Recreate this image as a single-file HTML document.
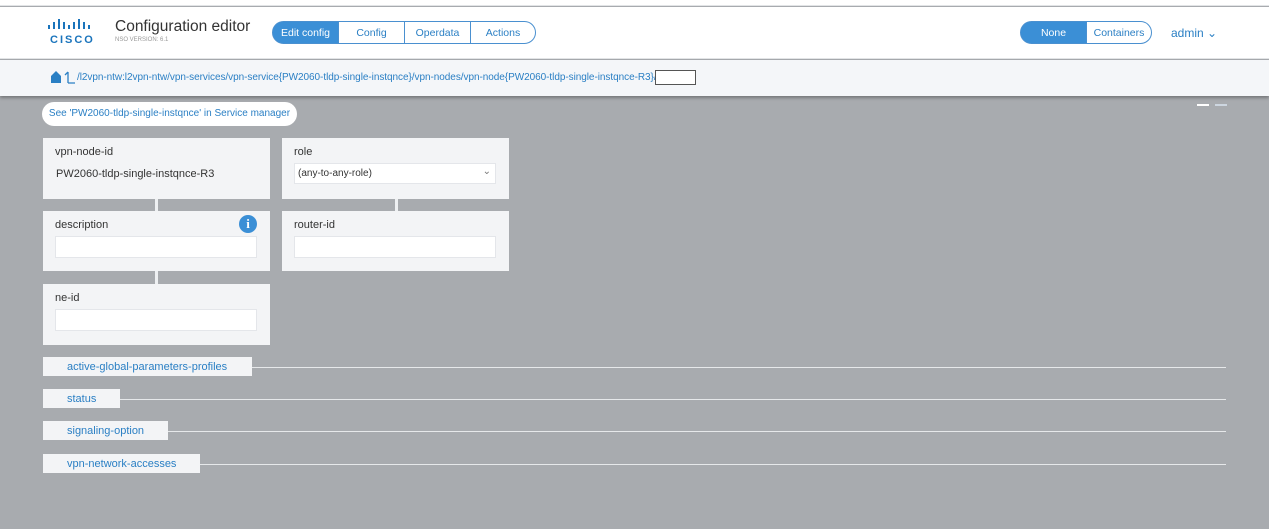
<!DOCTYPE html>
<html><head><style>
*{margin:0;padding:0;box-sizing:border-box}
body{width:1269px;height:529px;overflow:hidden;background:#a8abaf;font-family:"Liberation Sans",sans-serif;position:relative}
.a{position:absolute}
.box{position:absolute;background:#f3f4f6;width:227px}
.lbl{position:absolute;left:12px;top:8px;font-size:11px;color:#333}
.inp{position:absolute;left:12px;width:202px;height:22px;background:#fff;border:1px solid #e4e6ea}
.conn{position:absolute;width:3px;background:#eef0f2}
.exp{position:absolute;left:43px;height:19px;background:#f3f4f6;color:#2a7fc4;font-size:11px;padding:4px 0 0 24px}
.ln{position:absolute;height:1px;background:#e6e8ea;right:43px}
.seg{position:absolute;top:21px;height:23px;border:1px solid #4a90d0;font-size:10.5px;color:#2a7fc4;display:flex;align-items:center;justify-content:center;padding-top:1px}
</style></head><body>
<div class="a" style="left:0;top:0;width:1269px;height:6px;background:#fff;border-bottom:1px solid #e2e4e6"></div>
<div class="a" style="left:0;top:7px;width:1269px;height:52px;background:#fff;border-bottom:1px solid #e2e4e6"></div>
<div class="a" style="left:47px;top:19px;color:#1a74bc;font-size:10px;letter-spacing:1px;line-height:8px">
<svg width="46" height="12"><g fill="#1a74bc"><rect x="1" y="6" width="2" height="4"/><rect x="6" y="3" width="2" height="7"/><rect x="11" y="0" width="2" height="10"/><rect x="16" y="3" width="2" height="7"/><rect x="21" y="6" width="2" height="4"/><rect x="26" y="3" width="2" height="7"/><rect x="31" y="0" width="2" height="10"/><rect x="36" y="3" width="2" height="7"/><rect x="41" y="6" width="2" height="4"/></g></svg>
<div style="font-weight:bold;font-size:11px;margin-left:3px;margin-top:3px;letter-spacing:2px">CISCO</div></div>
<div class="a" style="left:115px;top:18px;font-size:15.5px;color:#333">Configuration editor</div>
<div class="a" style="left:115px;top:37px;font-size:6px;color:#999">NSO VERSION: 6.1</div>
<div class="seg" style="left:272px;width:67px;background:#3b8fd6;color:#fff;border-radius:12px 0 0 12px">Edit config</div>
<div class="seg" style="left:338px;width:67px">Config</div>
<div class="seg" style="left:404px;width:67px">Operdata</div>
<div class="seg" style="left:470px;width:66px;border-radius:0 12px 12px 0">Actions</div>
<div class="seg" style="left:1020px;width:67px;background:#3b8fd6;color:#fff;border-radius:12px 0 0 12px">None</div>
<div class="seg" style="left:1086px;width:66px;border-radius:0 12px 12px 0">Containers</div>
<div class="a" style="left:1171px;top:26px;font-size:12px;color:#2a7fc4">admin ⌄</div>
<div class="a" style="left:0;top:60px;width:1269px;height:36px;background:#f4f6f9;box-shadow:0 2px 3px rgba(0,0,0,.3)"></div>
<svg class="a" style="left:50px;top:70px" width="26" height="14"><path d="M1 6L6 1L11 6V13H1Z" fill="#2a7fc4"/><path d="M18 13V2M15 5L18 2M18 13H25" stroke="#2a7fc4" stroke-width="1.3" fill="none"/></svg>
<div class="a" style="left:77px;top:72px;font-size:10px;color:#2a7fc4;letter-spacing:-0.05px">/l2vpn-ntw:l2vpn-ntw/vpn-services/vpn-service{PW2060-tldp-single-instqnce}/vpn-nodes/vpn-node{PW2060-tldp-single-instqnce-R3}/</div>
<div class="a" style="left:655px;top:70px;width:41px;height:15px;background:#fff;border:1px solid #555"></div>
<div class="a" style="left:1197px;top:104px;width:12px;height:2px;background:#fff"></div>
<div class="a" style="left:1215px;top:104px;width:12px;height:2px;background:#cdd6e0"></div>
<div class="a" style="left:42px;top:102px;width:255px;height:24px;background:#fff;border-radius:12px;font-size:10px;color:#2a7fc4;line-height:24px;text-align:center">See 'PW2060-tldp-single-instqnce' in Service manager</div>
<div class="conn" style="left:155px;top:199px;height:12px"></div>
<div class="conn" style="left:155px;top:271px;height:13px"></div>
<div class="conn" style="left:395px;top:199px;height:12px"></div>
<div class="box" style="left:43px;top:138px;height:61px"><div class="lbl">vpn-node-id</div><div class="a" style="left:13px;top:30px;font-size:11px;color:#333">PW2060-tldp-single-instqnce-R3</div></div>
<div class="box" style="left:282px;top:138px;height:61px"><div class="lbl">role</div><div class="inp" style="top:25px;height:21px;font-size:10px;color:#333;padding:4px 3px">(any-to-any-role)<span style="position:absolute;right:4px;top:2px;color:#777">⌄</span></div></div>
<div class="box" style="left:43px;top:211px;height:60px"><div class="lbl">description</div><div class="a" style="left:196px;top:4px;width:18px;height:18px;border-radius:50%;background:#3b8fd6;color:#fff;font-weight:bold;font-size:13px;text-align:center;line-height:18px;font-family:'Liberation Serif',serif">i</div><div class="inp" style="top:25px"></div></div>
<div class="box" style="left:282px;top:211px;height:60px"><div class="lbl">router-id</div><div class="inp" style="top:25px"></div></div>
<div class="box" style="left:43px;top:284px;height:61px"><div class="lbl">ne-id</div><div class="inp" style="top:25px"></div></div>
<div class="exp" style="top:357px;width:209px">active-global-parameters-profiles</div><div class="ln" style="left:252px;top:367px"></div>
<div class="exp" style="top:389px;width:77px">status</div><div class="ln" style="left:120px;top:399px"></div>
<div class="exp" style="top:421px;width:125px">signaling-option</div><div class="ln" style="left:168px;top:431px"></div>
<div class="exp" style="top:454px;width:157px">vpn-network-accesses</div><div class="ln" style="left:200px;top:464px"></div>
</body></html>
